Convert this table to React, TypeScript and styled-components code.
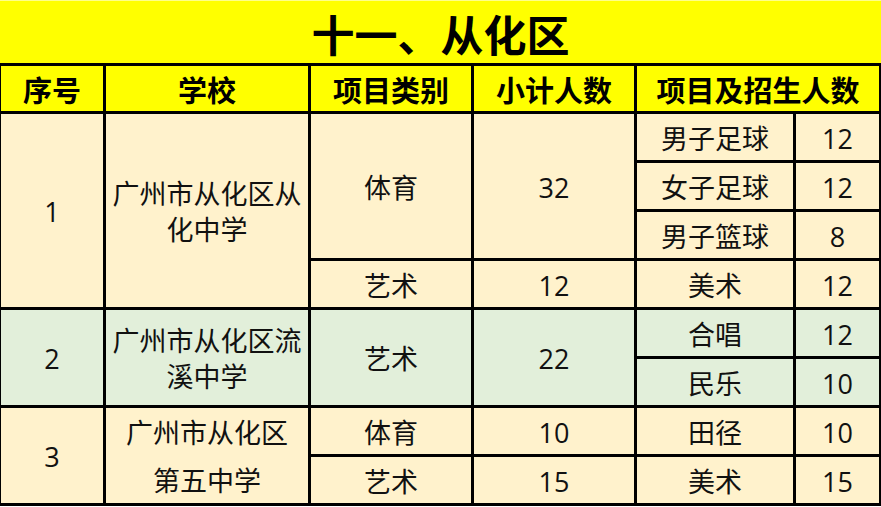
import React from "react";
import styled, { createGlobalStyle } from "styled-components";

const GlobalStyle = createGlobalStyle`
  html, body {
    margin: 0;
    padding: 0;
    background: #ffffff;
  }
  body {
    font-family: "Open Sans", "Noto Sans CJK SC", sans-serif;
    color: #000;
  }
`;

type Tone = "cream" | "green";

const toneColor: Record<Tone, string> = {
  cream: "#fff2cc",
  green: "#e2efda",
};

type Category = { name: string; total: string; items: [string, string][] };
type Section = {
  no: string;
  school: string[];
  tone: Tone;
  spread?: boolean;
  categories: Category[];
};

const sections: Section[] = [
  {
    no: "1",
    school: ["广州市从化区从", "化中学"],
    tone: "cream",
    categories: [
      {
        name: "体育",
        total: "32",
        items: [
          ["男子足球", "12"],
          ["女子足球", "12"],
          ["男子篮球", "8"],
        ],
      },
      { name: "艺术", total: "12", items: [["美术", "12"]] },
    ],
  },
  {
    no: "2",
    school: ["广州市从化区流", "溪中学"],
    tone: "green",
    categories: [
      {
        name: "艺术",
        total: "22",
        items: [
          ["合唱", "12"],
          ["民乐", "10"],
        ],
      },
    ],
  },
  {
    no: "3",
    school: ["广州市从化区", "第五中学"],
    tone: "cream",
    spread: true,
    categories: [
      { name: "体育", total: "10", items: [["田径", "10"]] },
      { name: "艺术", total: "15", items: [["美术", "15"]] },
    ],
  },
];

const headers = ["序号", "学校", "项目类别", "小计人数"];

const Page = styled.div`
  width: 881px;
  height: 507px;
  overflow: hidden;
  display: flex;
  flex-direction: column;
`;

const Title = styled.div`
  height: 63px;
  border-top: 1px solid #ffff8a;
  background: #ffff00;
  display: flex;
  align-items: center;
  justify-content: center;
  font-family: "Noto Sans CJK SC", sans-serif;
  font-weight: 700;
  font-size: 43px;
  letter-spacing: 0px;
  padding-top: 2px;
  box-sizing: border-box;
`;

const Grid = styled.div`
  display: grid;
  grid-template-columns: 102px 202px 160px 160px 156px 83px;
  grid-template-rows: 45px repeat(8, 46px);
  gap: 3px;
  padding: 3px 2px 3px 1px;
  background: #000;
`;

const HeaderCell = styled.div<{ $span?: number }>`
  grid-column: span ${(p) => p.$span ?? 1};
  background: #ffff00;
  display: flex;
  align-items: center;
  justify-content: center;
  font-family: "Noto Sans CJK SC", sans-serif;
  font-weight: 700;
  font-size: 29px;
  line-height: 1;
  padding-top: 1px;
`;

const Cell = styled.div<{
  $tone: Tone;
  $row: number;
  $col: number;
  $rows?: number;
}>`
  grid-row: ${(p) => p.$row} / span ${(p) => p.$rows ?? 1};
  grid-column: ${(p) => p.$col};
  background: ${(p) => toneColor[p.$tone]};
  display: flex;
  flex-direction: column;
  align-items: center;
  justify-content: center;
  text-align: center;
  font-size: 27px;
  line-height: 1;
  padding-top: 2px;
  color: #111;
`;

const SchoolLine = styled.span<{ $spread?: boolean }>`
  display: block;
  line-height: ${(p) => (p.$spread ? "48px" : "36px")};
`;

function renderSection(section: Section, startRow: number) {
  const span = section.categories.reduce((n, c) => n + c.items.length, 0);
  const cells: React.ReactNode[] = [
    <Cell key="no" $tone={section.tone} $row={startRow} $rows={span} $col={1}>
      {section.no}
    </Cell>,
    <Cell key="school" $tone={section.tone} $row={startRow} $rows={span} $col={2}>
      {section.school.map((line) => (
        <SchoolLine key={line} $spread={section.spread}>
          {line}
        </SchoolLine>
      ))}
    </Cell>,
  ];
  let row = startRow;
  section.categories.forEach((cat, ci) => {
    const rows = cat.items.length;
    cells.push(
      <Cell key={`cat${ci}`} $tone={section.tone} $row={row} $rows={rows} $col={3}>
        {cat.name}
      </Cell>,
      <Cell key={`tot${ci}`} $tone={section.tone} $row={row} $rows={rows} $col={4}>
        {cat.total}
      </Cell>
    );
    cat.items.forEach(([name, count], ii) => {
      cells.push(
        <Cell key={`it${ci}-${ii}`} $tone={section.tone} $row={row + ii} $col={5}>
          {name}
        </Cell>,
        <Cell key={`ct${ci}-${ii}`} $tone={section.tone} $row={row + ii} $col={6}>
          {count}
        </Cell>
      );
    });
    row += rows;
  });
  return { cells, next: row };
}

export default function App() {
  let row = 2;
  const body = sections.map((s, i) => {
    const { cells, next } = renderSection(s, row);
    row = next;
    return <React.Fragment key={i}>{cells}</React.Fragment>;
  });

  return (
    <>
      <GlobalStyle />
      <Page>
        <Title>十一、从化区</Title>
        <Grid>
          {headers.map((h) => (
            <HeaderCell key={h}>{h}</HeaderCell>
          ))}
          <HeaderCell $span={2}>项目及招生人数</HeaderCell>
          {body}
        </Grid>
      </Page>
    </>
  );
}
